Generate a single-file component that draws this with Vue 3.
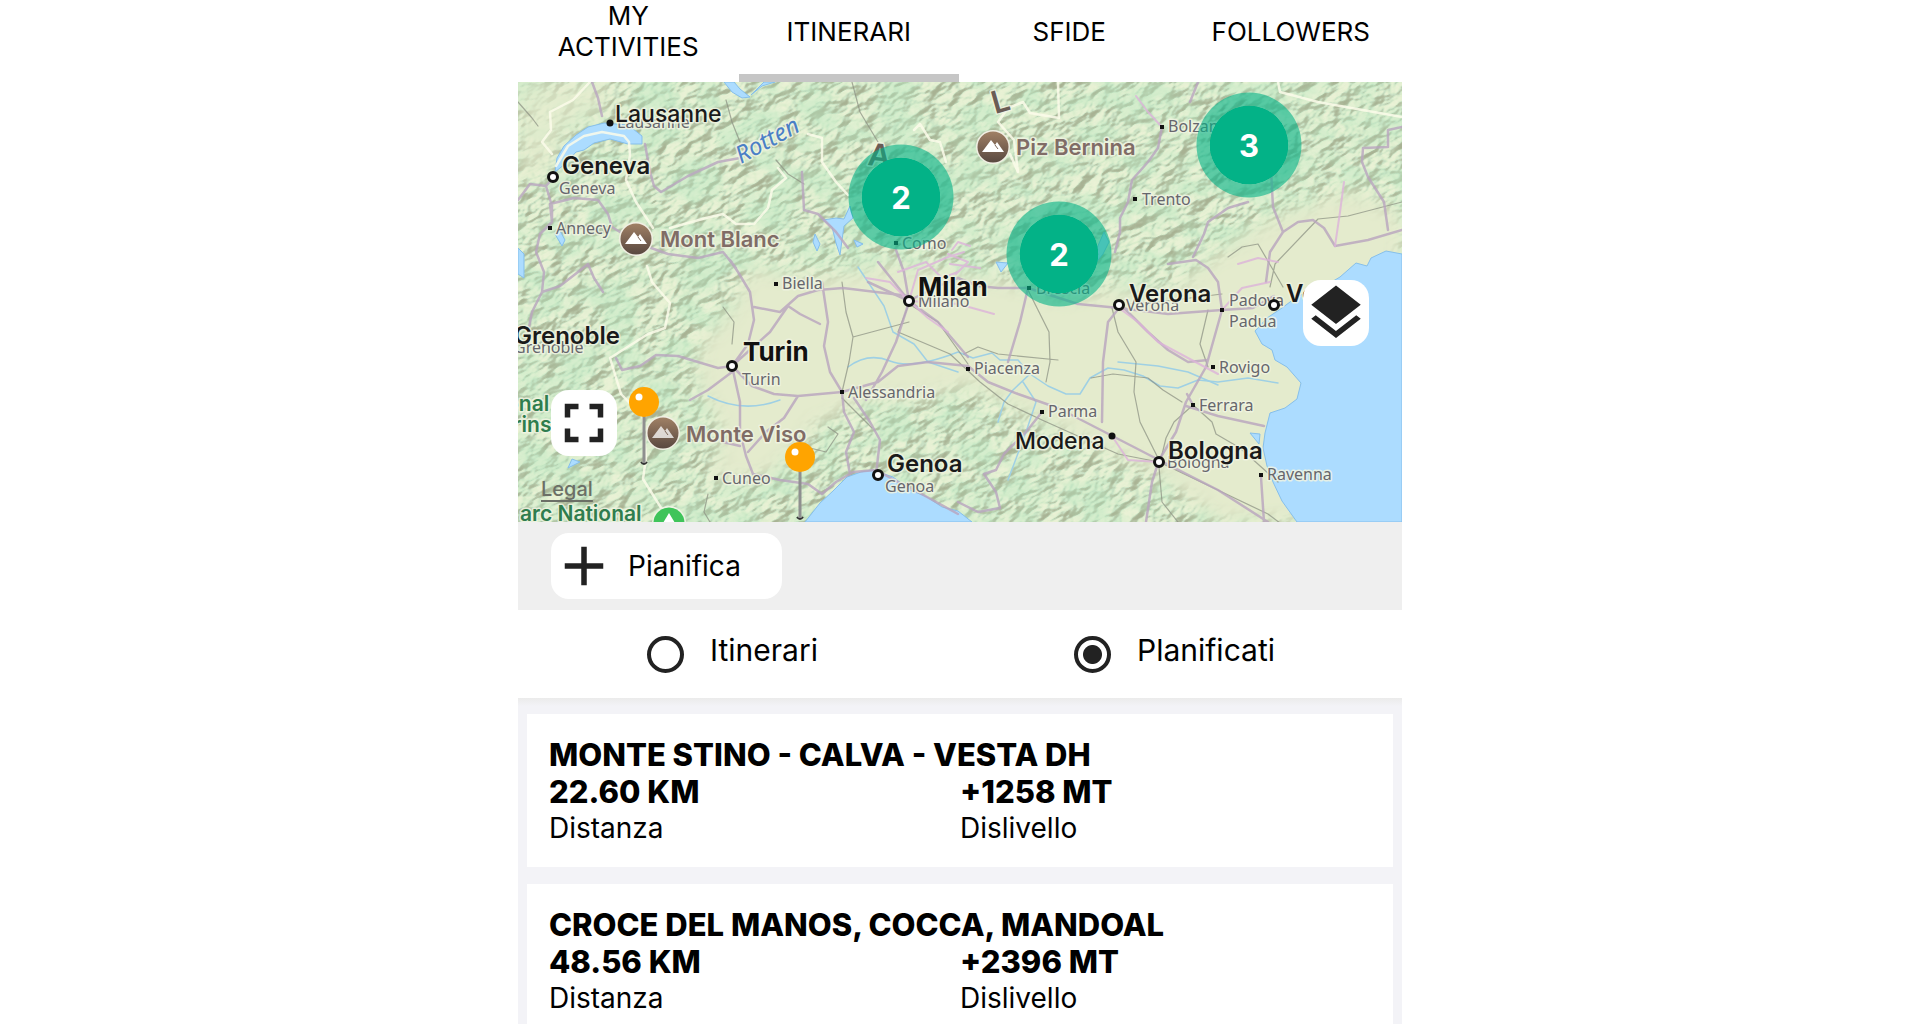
<template>
  <main class="screen">
    <nav class="tabs">
      <button
        v-for="tab in tabs"
        :key="tab"
        type="button"
        class="tab"
        :class="{ active: tab === activeTab }"
        @click="activeTab = tab"
      >
        {{ tab }}
      </button>
    </nav>

    <section class="map" aria-label="Mappa">
      <svg class="map-canvas" viewBox="0 0 884 440">
        <defs>
          <!-- shaded relief built from noise -->
          <filter
            id="relief"
            x="0"
            y="0"
            width="100%"
            height="100%"
            color-interpolation-filters="sRGB"
          >
            <feTurbulence
              type="fractalNoise"
              baseFrequency="0.05 0.085"
              numOctaves="3"
              seed="21"
            />
            <feColorMatrix
              values="0 0 0 0 0  0 0 0 0 0  0 0 0 0 0  1 0 0 0 0"
            />
            <feDiffuseLighting
              surfaceScale="9"
              diffuseConstant="1"
              lighting-color="#fff"
            >
              <feDistantLight azimuth="250" elevation="52" />
            </feDiffuseLighting>
            <feComponentTransfer>
              <feFuncR type="table" tableValues=".66 .69 .73 .79 .86 .92" />
              <feFuncG type="table" tableValues=".7 .74 .79 .88 .93 .95" />
              <feFuncB type="table" tableValues=".58 .62 .67 .77 .8 .84" />
            </feComponentTransfer>
          </filter>
          <!-- mint patches of forest over the relief -->
          <filter
            id="forest"
            x="0"
            y="0"
            width="100%"
            height="100%"
            color-interpolation-filters="sRGB"
          >
            <feTurbulence
              type="fractalNoise"
              baseFrequency="0.025 0.035"
              numOctaves="3"
              seed="4"
            />
            <feColorMatrix
              values="0 0 0 0 .72  0 0 0 0 .91  0 0 0 0 .76  4 0 0 0 -1.6"
            />
          </filter>
          <filter id="soft" x="-10%" y="-10%" width="120%" height="120%">
            <feGaussianBlur stdDeviation="9" />
          </filter>
          <mask id="mountains">
            <rect width="884" height="440" fill="#fff" />
            <g fill="#000" filter="url(#soft)">
              <path
                d="M182 262 L215 225 L232 185 L300 196 L370 182 L480 196 L545 215 L600 205 L650 210 L690 178 L745 140 L830 108 L884 130 V440 H724 L650 398 L560 356 L500 330 L450 304 L398 318 L352 318 L300 342 L255 392 L192 402 L205 350 L178 300 Z"
              />
              <path d="M0 0 H95 L88 30 L52 45 L30 90 L0 100 Z" opacity=".7" />
              <path d="M560 320 L600 360 L700 440 H770 L700 330 Z" />
            </g>
          </mask>
          <linearGradient id="brown" x1="0" y1="0" x2="0" y2="1">
            <stop offset="0" stop-color="#a08065" />
            <stop offset="1" stop-color="#594840" />
          </linearGradient>
        </defs>

        <rect width="884" height="440" fill="#e4ebcd" />
        <g mask="url(#mountains)">
          <rect
            x="-200"
            y="-400"
            width="1300"
            height="1300"
            transform="rotate(-28 442 220)"
            filter="url(#relief)"
          />
          <rect width="884" height="440" filter="url(#forest)" opacity=".4" />
        </g>

        <g class="water">
          <path
            d="M884 172 L868 169 L853 176 L849 184 L838 181 L822 195 L805 205 L780 214 L764 226 L749 236 L737 249 L744 262 L754 268 L757 278 L769 285 L783 301 L779 317 L767 326 L752 331 L747 351 L745 366 L749 384 L755 400 L764 419 L779 440 H884 Z"
          />
          <path
            d="M287 440 L302 421 L315 409 L329 395 L343 390 L355 388 L375 395 L392 408 L409 415 L424 425 L440 429 L454 440 Z"
          />
          <path
            d="M37 90 L39 76 L46 64 L58 53 L70 45 L86 41 L110 43 L124 54 L124 62 L110 62 L92 57 L76 61 L66 68 L58 70 L47 82 Z"
          />
          <path d="M332 124 L326 137 L318 136 L305 138 L314 145 L318 161 L322 173 L324 158 L326 144 L335 136 Z" />
          <path d="M206 0 L214 10 L224 16 L232 15 L222 7 L216 0 Z M233 13 L244 4 L257 0 L246 0 Z" />
          <path d="M586 150 L579 166 L572 188 L585 172 L591 160 Z" />
          <path d="M478 180 L490 181 L483 190 Z" />
          <path d="M41 147 L47 158 L44 164 L37 152 Z M0 166 L6 172 V196 L0 192 Z" />
          <path d="M297 152 L302 162 L299 169 L295 160 Z M336 158 L345 162 L339 165 Z" />
          <path d="M732 351 L742 352 L741 362 Z M54 377 L62 380 L50 386 Z" />
        </g>

        <g class="rivers">
          <path
            d="M262 318 Q225 332 190 314 M330 285 Q350 270 372 279 T440 270 L455 276 L474 271 L482 278 L500 278 L512 292 L530 304 L548 312 L562 312 L572 296 L590 286 L606 288 L625 294 L642 304 L660 306 L680 298 L700 300 L730 296 L760 301"
          />
          <path
            d="M340 185 L354 206 L366 224 L375 250 L396 262 L410 280 L440 290 M600 280 L640 284 L670 290 L700 303 M480 340 L486 320 L495 308 L514 290 M505 300 L518 320 L508 350 L490 398"
          />
        </g>

        <g class="borders">
          <path
            d="M72 0 L55 18 L32 30 L33 48 L24 60 L34 72 M38 84 L50 64 L66 54 L84 50 L106 54 L111 60 L112 73 L108 98 L118 120 L135 146 M152 146 L188 136 L205 132 L218 142 L236 142 L250 126 L254 108 L268 96 L260 86 M290 52 L304 56 L304 80 L318 100 L330 113 M396 48 L402 42 L412 58 L422 60 L428 80 M129 184 L134 200 L152 221 L147 246 L130 252 L92 276 L103 312 L125 335 L128 376 L125 397 L150 437 M540 0 L541 36 L512 31 L505 20 L490 26 L480 40 L496 58 L500 90 L492 72 M760 0 L762 10 L800 20 L884 35"
          />
        </g>

        <g class="rail">
          <path
            d="M208 18 L214 40 L222 60 M258 78 L270 92 L286 102 M334 0 L342 30 L360 60 M0 20 L14 36 L20 44 M391 222 L380 250 L432 272 L462 300 L490 322 L524 338 L600 372 L641 380 L750 432 L790 462 M324 310 L331 280 L335 255 L328 230 L324 200 M335 255 L391 240 M391 222 L420 240 L450 282 M594 226 L600 250 L618 280 L616 310 L622 340 L641 378 M690 285 L682 262 L690 228 M675 323 L656 340 L648 356 L641 385 L644 420 L660 440 M610 222 L640 220 L704 212 M752 205 L757 182 L800 137 L830 134 L884 120 M324 316 L354 346 M446 272 L460 265 L480 272 L540 278 M510 208 L522 232 L531 250 L532 280 L528 300 M573 296 L595 292 L630 296 L645 308 L664 320 M675 323 L694 340 L698 352 L722 366 L760 400 M710 175 L724 165 L740 162 L765 205 M310 345 L320 352 L308 370 L292 366 M205 225 L216 240 L214 262 M190 412 L186 430 L192 440"
          />
        </g>

        <g class="roads">
          <path
            d="M0 118 L12 102 L28 104 L36 95 M28 104 L34 124 L34 140 L22 152 L18 170 L26 190 L24 210 L14 230 L10 250 M34 140 L32 122 M74 0 L80 16 L84 34 M32 122 L56 116 L80 118 L90 132 L94 145 L102 150 M24 210 L42 204 L60 190 L70 182 L76 196 L85 210 M127 62 L132 90 L136 104 L143 110 L170 94 L200 80 L222 76 M133 166 L150 172 L180 176 L205 170 L218 186 M284 90 L286 128 L300 132 L318 150 L330 166"
          />
          <path
            d="M98 276 L104 288 L122 284 L138 273 L160 274 L180 280 L200 286 L214 284 M214 284 L230 262 L236 238 L232 210 L220 190 L212 178 M236 225 L262 230 L280 214 L300 208 L325 206 L391 214 M214 284 L222 320 L222 350 L228 374 L235 392 M205 360 L222 364 M172 318 L190 308 L214 290 M214 284 L234 304 L256 312 L280 314 L324 310 M214 284 L252 250 L270 224 L282 232 L302 242 M324 310 L312 290 L306 264 L310 240 L304 200 M324 310 L326 330 L336 350 L328 370 L332 392 M336 316 L352 340 L362 358 L358 392 M280 314 L266 336 L248 350 L230 370 M235 392 L262 398 L290 402 L304 412 M304 412 L318 400 L335 390 L358 388 L380 400 L400 410 L440 432 M391 220 L378 260 L364 290 L348 318 M324 310 L360 300 L380 284 L410 280 L450 284 L470 300 L500 312 L540 326 L575 344 L641 378 L700 408 L750 440"
          />
          <path
            d="M391 219 L415 206 L440 196 L460 204 L480 206 L510 206 L560 222 L601 226 L650 232 L704 228 L735 226 L756 214 M510 206 L502 240 L490 280 M601 226 L590 240 L585 280 L584 340 M641 378 L658 350 L668 320 L688 285 L704 228 M641 378 L634 400 L628 440 M668 324 L700 334 L746 344 M743 395 L746 440 M675 323 L669 312 M524 330 L508 350 L486 372 L478 388 L466 392 L478 410 L482 426 L460 430 L440 420 M391 219 L376 200 L360 180 M391 219 L386 190 L378 168 M391 219 L350 200 M391 219 L420 240 L450 275 M704 228 L700 200 L690 186 L678 178 L650 182"
          />
          <path
            d="M680 0 L676 10 L672 20 M644 45 L640 66 L630 80 L614 98 L610 120 L602 136 L602 150 L597 170 M765 150 L755 125 L752 70 M765 150 L752 170 L748 200 M765 150 L780 140 L795 138 L806 146 L817 164 L850 158 L884 148 M884 45 L870 48 L870 65 L845 66 L844 80 L850 95 L866 120 L870 148 M675 175 L686 152 L690 140 L710 126 L730 120 M600 220 L630 250 L650 268 L670 280 L690 278"
          />
        </g>
        <g class="roads pink">
          <path
            d="M618 14 L630 30 L644 45 M391 219 L372 200 L348 196 M391 219 L400 188 L430 175 L446 170 M391 219 L410 236 L430 250 M391 219 L440 222 L476 232 M380 190 L408 180 L424 196 L440 190 M704 228 L724 206 L752 200 M601 226 L620 240 L640 260 L700 292 M594 354 L610 378 M641 380 L610 378 M430 172 L450 180 L438 192 M432 182 L462 186 M817 164 L822 130 L826 100 M720 182 L740 176 L760 180 M434 168 L440 160 L452 164"
          />
        </g>

        <rect
          v-for="d in dots"
          :key="d.join()"
          class="dot"
          :x="d[0] - 2"
          :y="d[1] - 2"
          width="4"
          height="4"
        />

        <text
          v-for="(l, i) in labels"
          :key="i"
          :class="l.kind"
          :x="l.x"
          :y="l.y"
        >
          {{ l.text }}
        </text>
        <text class="river-name" transform="translate(223 82) rotate(-29)">
          Rotten
        </text>
        <text class="range" transform="translate(349 83) rotate(6)">A</text>
        <text class="range" transform="translate(477 32) rotate(-16)">L</text>

        <circle
          v-for="r in rings"
          :key="r.join()"
          class="ring"
          :cx="r[0]"
          :cy="r[1]"
          r="4.5"
        />
        <circle class="bullet" cx="92" cy="41" r="3.5" />
        <circle class="bullet" cx="594" cy="354" r="3.5" />

        <g
          v-for="p in peaks"
          :key="p.x"
          :transform="`translate(${p.x} ${p.y})`"
        >
          <circle r="17" fill="#f1efe4" />
          <circle r="15.5" fill="url(#brown)" />
          <path
            d="M-11 5 L-2 -7 L2 -2 L4 -5 L11 5 Z"
            fill="#fff"
            :opacity="p.dim ? 0.75 : 1"
          />
          <path d="M2 -2 L5 2" stroke="#7b6557" stroke-width="1" />
        </g>
        <g transform="translate(151 441)">
          <circle r="17" fill="#eef3e4" />
          <circle r="15.5" fill="#3fc45a" />
          <path d="M0 -10 L6 0 H-6 Z" fill="#fff" />
        </g>

        <g
          v-for="p in pins"
          :key="p.x"
          :transform="`translate(${p.x} ${p.y})`"
        >
          <path d="M-3 60 Q0 64 3 60" fill="none" stroke="#333" stroke-width="2" />
          <path d="M0 14 V61" stroke="#8f8f8f" stroke-width="3" />
          <circle r="15" fill="#ffa400" />
          <circle cx="-5" cy="-5" r="3.5" fill="#fff" />
        </g>
      </svg>

      <button
        v-for="c in clusters"
        :key="c.x"
        type="button"
        class="cluster"
        :style="{ left: (c.x / 884) * 100 + '%', top: (c.y / 440) * 100 + '%' }"
      >
        {{ c.count }}
      </button>

      <a href="#legal" class="legal">Legal</a>
      <button type="button" class="map-btn layers" aria-label="Livelli">
        <svg class="icon" viewBox="0 0 24 24">
          <path
            d="m11.99 18.54-7.37-5.73L3 14.07l9 7 9-7-1.63-1.27-7.38 5.74zM12 16l7.36-5.73L21 9l-9-7-9 7 1.63 1.27L12 16z"
          />
        </svg>
      </button>
      <button type="button" class="map-btn full" aria-label="Schermo intero">
        <svg class="icon" viewBox="0 0 24 24">
          <path
            d="M7 14H5v5h5v-2H7v-3zm-2-4h2V7h3V5H5v5zm12 7h-3v2h5v-5h-2v3zM14 5v2h3v3h2V5h-5z"
          />
        </svg>
      </button>
    </section>

    <div class="toolbar">
      <button type="button" class="plan">
        <svg class="icon" viewBox="0 0 24 24">
          <path d="M19 13h-6v6h-2v-6H5v-2h6V5h2v6h6v2z" />
        </svg>
        Pianifica
      </button>
    </div>

    <div class="filter" role="radiogroup" aria-label="Elenco">
      <label v-for="o in options" :key="o" class="option">
        <input v-model="selected" type="radio" name="list" :value="o" />
        <span>{{ o }}</span>
      </label>
    </div>

    <section class="list">
      <article v-for="r in routes" :key="r.name" class="card">
        <h2>{{ r.name }}</h2>
        <dl>
          <div>
            <dd>{{ r.distance }} KM</dd>
            <dt>Distanza</dt>
          </div>
          <div>
            <dd>+{{ r.climb }} MT</dd>
            <dt>Dislivello</dt>
          </div>
        </dl>
      </article>
    </section>
  </main>
</template>

<script setup>
import { ref } from "vue";

const tabs = ["MY ACTIVITIES", "ITINERARI", "SFIDE", "FOLLOWERS"];
const activeTab = ref("ITINERARI");

const options = ["Itinerari", "Planificati"];
const selected = ref("Planificati");

const routes = [
  { name: "MONTE STINO - CALVA - VESTA DH", distance: "22.60", climb: 1258 },
  { name: "CROCE DEL MANOS, COCCA, MANDOAL", distance: "48.56", climb: 2396 },
];

// map items, in the 884 x 440 units of the map's viewBox
const clusters = [
  { x: 383, y: 115, count: 2 },
  { x: 541, y: 172, count: 2 },
  { x: 731, y: 63, count: 3 },
];
const pins = [
  { x: 126, y: 320 },
  { x: 282, y: 375 },
];
const peaks = [
  { x: 118, y: 157 },
  { x: 475, y: 65 },
  { x: 145, y: 351, dim: true },
];
const rings = [
  [35, 95],
  [391, 219],
  [214, 284],
  [360, 393],
  [601, 223],
  [756, 223],
  [641, 380],
];
const dots = [
  [32, 146],
  [378, 161],
  [644, 45],
  [617, 117],
  [258, 202],
  [324, 310],
  [198, 396],
  [511, 206],
  [704, 228],
  [450, 287],
  [524, 330],
  [695, 285],
  [675, 323],
  [743, 393],
];

// minor labels first, the big ones cover part of them
const labels = [
  { kind: "minor", x: 99, y: 46, text: "Lausanne" },
  { kind: "minor", x: 41, y: 112, text: "Geneva" },
  { kind: "minor", x: 38, y: 152, text: "Annecy" },
  { kind: "minor", x: 384, y: 167, text: "Como" },
  { kind: "minor", x: 650, y: 50, text: "Bolzano" },
  { kind: "minor", x: 624, y: 123, text: "Trento" },
  { kind: "minor", x: 264, y: 207, text: "Biella" },
  { kind: "minor", x: 400, y: 225, text: "Milano" },
  { kind: "minor", x: -4, y: 271, text: "Grenoble" },
  { kind: "minor", x: 224, y: 303, text: "Turin" },
  { kind: "minor", x: 330, y: 316, text: "Alessandria" },
  { kind: "minor", x: 204, y: 402, text: "Cuneo" },
  { kind: "minor", x: 367, y: 410, text: "Genoa" },
  { kind: "minor", x: 518, y: 212, text: "Brescia" },
  { kind: "minor", x: 608, y: 229, text: "Verona" },
  { kind: "minor", x: 711, y: 224, text: "Padova" },
  { kind: "minor", x: 711, y: 245, text: "Padua" },
  { kind: "minor", x: 456, y: 292, text: "Piacenza" },
  { kind: "minor", x: 530, y: 335, text: "Parma" },
  { kind: "minor", x: 701, y: 291, text: "Rovigo" },
  { kind: "minor", x: 681, y: 329, text: "Ferrara" },
  { kind: "minor", x: 649, y: 386, text: "Bologna" },
  { kind: "minor", x: 749, y: 398, text: "Ravenna" },
  { kind: "town", x: 97, y: 40, text: "Lausanne" },
  { kind: "town", x: 497, y: 367, text: "Modena" },
  { kind: "city", x: 44, y: 92, text: "Geneva" },
  { kind: "city", x: -4, y: 262, text: "Grenoble" },
  { kind: "city", x: 369, y: 390, text: "Genoa" },
  { kind: "city", x: 611, y: 220, text: "Verona" },
  { kind: "city", x: 768, y: 220, text: "Venice" },
  { kind: "city", x: 650, y: 377, text: "Bologna" },
  { kind: "metro", x: 400, y: 214, text: "Milan" },
  { kind: "metro", x: 225, y: 279, text: "Turin" },
  { kind: "peak", x: 142, y: 165, text: "Mont Blanc" },
  { kind: "peak", x: 498, y: 73, text: "Piz Bernina" },
  { kind: "peak", x: 168, y: 360, text: "Monte Viso" },
  { kind: "park", x: -12, y: 329, text: "onal" },
  { kind: "park", x: -5, y: 350, text: "rins" },
  { kind: "park", x: 2, y: 439, text: "arc National" },
];
</script>

<style>
body {
  margin: 0;
  background: #fff;
}
</style>

<style scoped>
.screen {
  display: flex;
  flex-direction: column;
  max-width: 884px;
  height: 100vh;
  margin: 0 auto;
  overflow: hidden;
  font-family: Inter, "Liberation Sans", sans-serif;
  color: #000;
}

button {
  border: none;
  padding: 0;
  font: inherit;
  color: inherit;
  cursor: pointer;
}

.icon {
  width: 66px;
  height: 66px;
  flex: none;
  fill: #222;
}

/* tabs */
.tabs {
  display: grid;
  grid-template-columns: repeat(4, 1fr);
  flex: none;
}
.tab {
  min-height: 82px;
  padding: 0 32px 12px;
  border-bottom: 8px solid transparent;
  background: none;
  font-size: 26px;
  line-height: 31px;
}
.tab.active {
  border-bottom-color: #c6c6c6;
}

/* map */
.map {
  position: relative;
  flex: none;
  aspect-ratio: 884 / 440;
  overflow: hidden;
}
.map-canvas {
  display: block;
  width: 100%;
  height: 100%;
}
.water {
  fill: #acdcff;
  stroke: #86bfea;
  stroke-width: 1;
}
.rivers,
.borders,
.rail,
.roads {
  fill: none;
  stroke-linejoin: round;
  stroke-linecap: round;
}
.rivers {
  stroke: #9fd0e4;
  stroke-width: 1.5;
}
.borders {
  stroke: #fbfbea;
  stroke-width: 2.5;
  opacity: 0.85;
}
.rail {
  stroke: #8e9384;
  stroke-width: 1.2;
  opacity: 0.75;
}
.roads {
  stroke: #b9a5bf;
  stroke-width: 2.5;
  opacity: 0.8;
}
.roads.pink {
  stroke: #dcb3da;
  stroke-width: 2;
}
.dot,
.bullet {
  fill: #111;
}
.ring {
  fill: #fff;
  stroke: #111;
  stroke-width: 3;
}
.map-canvas text {
  paint-order: stroke;
  stroke: rgba(240, 244, 226, 0.85);
  stroke-width: 3px;
  stroke-linejoin: round;
}
.map-canvas .minor {
  font-family: "Noto Sans", sans-serif;
  font-size: 16px;
  fill: #66666c;
}
.town {
  font-size: 23px;
  font-weight: 500;
  fill: #1a1a1a;
}
.city {
  font-size: 24px;
  font-weight: 600;
  fill: #1a1a1a;
}
.metro {
  font-size: 26px;
  font-weight: 700;
  fill: #111;
}
.peak {
  font-size: 22px;
  font-weight: 600;
  fill: #806c66;
}
.park {
  font-size: 21px;
  font-weight: 600;
  fill: #2f7d4e;
}
.map-canvas .river-name {
  font-family: "Noto Sans", sans-serif;
  font-size: 24px;
  font-style: italic;
  fill: #4a7fc6;
}
.range {
  font-size: 31px;
  font-weight: 600;
  fill: #6a5c55;
}

.cluster {
  position: absolute;
  width: 105px;
  height: 105px;
  transform: translate(-50%, -50%);
  border: 13px solid rgba(3, 178, 135, 0.6);
  border-radius: 50%;
  background: #03b287;
  background-clip: padding-box;
  color: #fff;
  font-size: 31px;
  font-weight: 700;
}
.map-btn {
  position: absolute;
  display: grid;
  place-items: center;
  width: 66px;
  height: 66px;
  border-radius: 18px;
  background: #fff;
}
.layers {
  right: 33px;
  bottom: 176px;
}
.full {
  left: 33px;
  bottom: 66px;
}
.legal {
  position: absolute;
  left: 23px;
  bottom: 21px;
  color: #6b6f66;
  font-size: 20px;
  font-weight: 500;
  line-height: 24px;
  text-underline-offset: 4px;
}

/* toolbar */
.toolbar {
  display: flex;
  flex: none;
  padding: 11px 33px;
  background: #efefef;
}
.plan {
  display: flex;
  align-items: center;
  gap: 11px;
  padding-right: 41px;
  border-radius: 18px;
  background: #fff;
  font-size: 28px;
}

/* radio filter */
.filter {
  display: grid;
  grid-template-columns: 1fr 1fr;
  flex: none;
}
.option {
  display: flex;
  align-items: center;
  justify-content: center;
  gap: 26px;
  padding: 16px 13px 25px 0;
  font-size: 30px;
  line-height: 40px;
  cursor: pointer;
}
.option input {
  appearance: none;
  width: 37px;
  height: 37px;
  margin: 10px 0 0;
  border: 4px solid #222;
  border-radius: 50%;
}
.option input:checked {
  background: radial-gradient(circle, #222 9px, transparent 10px);
}

/* list */
.list {
  display: flex;
  flex: 1;
  flex-direction: column;
  gap: 17px;
  padding: 16px 9px;
  overflow-y: auto;
  scrollbar-width: none;
  background: linear-gradient(#ebebeb, #f3f3f7 8px);
}
.card {
  flex: none;
  padding: 22px 22px 20px;
  background: #fff;
}
.card h2,
.card dd {
  margin: 0;
  font-size: 31px;
  font-weight: 800;
  line-height: 37px;
}
.card dl {
  display: grid;
  grid-template-columns: 1fr 1fr;
  margin: 0;
}
.card dl > div {
  display: flex;
  flex-direction: column;
}
.card dt {
  font-size: 28px;
  line-height: 37px;
}
</style>
